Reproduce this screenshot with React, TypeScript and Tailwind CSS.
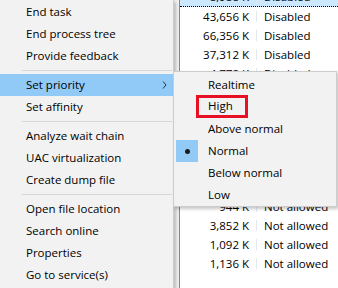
import * as React from 'react';

type Row = { mem: string; uac: string };

const rows: Row[] = [
  { mem: '8,988 K', uac: 'Disabled' },
  { mem: '43,656 K', uac: 'Disabled' },
  { mem: '66,356 K', uac: 'Disabled' },
  { mem: '37,312 K', uac: 'Disabled' },
  { mem: '4,772 K', uac: 'Disabled' },
  { mem: '2,140 K', uac: 'Disabled' },
  { mem: '1,804 K', uac: 'Not allowed' },
  { mem: '5,216 K', uac: 'Not allowed' },
  { mem: '1,368 K', uac: 'Not allowed' },
  { mem: '2,492 K', uac: 'Not allowed' },
  { mem: '10,260 K', uac: 'Not allowed' },
  { mem: '944 K', uac: 'Not allowed' },
  { mem: '3,852 K', uac: 'Not allowed' },
  { mem: '1,092 K', uac: 'Not allowed' },
  { mem: '1,136 K', uac: 'Not allowed' },
];

type MenuEntry = { label: string; sub?: boolean; active?: boolean } | 'sep';

const menu: MenuEntry[] = [
  { label: 'End task' },
  { label: 'End process tree' },
  { label: 'Provide feedback' },
  'sep',
  { label: 'Set priority', sub: true, active: true },
  { label: 'Set affinity' },
  'sep',
  { label: 'Analyze wait chain' },
  { label: 'UAC virtualization' },
  { label: 'Create dump file' },
  'sep',
  { label: 'Open file location' },
  { label: 'Search online' },
  { label: 'Properties' },
  { label: 'Go to service(s)' },
];

const priorities = ['Realtime', 'High', 'Above normal', 'Normal', 'Below normal', 'Low'];

const font = { fontFamily: '"Open Sans", "Noto Sans", sans-serif' };

function ProcessList() {
  return (
    <div className="flex h-full">
      <div className="w-[179px] shrink-0" />
      <div className="flex-1 overflow-hidden border-l border-[#828790] bg-white">
        <div className="-mt-[12px] flex flex-col">
          {rows.map((r, i) => (
            <div
              key={i}
              className={
                i === 0
                  ? 'flex h-[19px] items-center border-b border-dotted border-black bg-[#cce8ff]'
                  : 'flex h-[19px] items-center'
              }
            >
              <div className="w-[77px] shrink-0 border-r border-[#e3e8f0] pr-[7px] text-right">{r.mem}</div>
              <div className="pl-[7px] whitespace-nowrap">{r.uac}</div>
            </div>
          ))}
        </div>
      </div>
    </div>
  );
}

function Chevron() {
  return (
    <svg width="5" height="8" viewBox="0 0 5 8" className="mr-[6px]">
      <path d="M1 0.5 L4 4 L1 7.5" fill="none" stroke="#333" strokeWidth="1" />
    </svg>
  );
}

function ContextMenu() {
  return (
    <div className="absolute left-0 top-0 flex h-[288px] w-[174px] flex-col border-r border-[#cccccc] bg-[#f2f2f2] pt-[1px] shadow-[2px_2px_3px_rgba(0,0,0,0.22)]">
      {menu.map((m, i) =>
        m === 'sep' ? (
          <div key={i} className="flex h-[7px] items-center pl-[22px] pr-[1px]">
            <div className="h-px flex-1 bg-[#d7d7d7]" />
          </div>
        ) : (
          <div
            key={i}
            className={
              m.active
                ? 'flex h-[22px] items-center justify-between bg-[#91c9f7] pl-[26px]'
                : 'flex h-[22px] items-center pl-[26px]'
            }
          >
            <span>{m.label}</span>
            {m.sub && <Chevron />}
          </div>
        ),
      )}
    </div>
  );
}

function PrioritySubmenu() {
  return (
    <div className="absolute left-[173px] top-[71px] w-[164px] border border-[#cccccc] bg-[#f2f2f2] pt-[2px] shadow-[2px_2px_3px_rgba(0,0,0,0.22)]">
      {priorities.map((p) => (
        <div key={p} className="flex h-[22px] items-center pl-[2px]">
          <div
            className={
              p === 'Normal'
                ? 'flex h-[22px] w-[22px] shrink-0 items-center justify-center bg-[#91c9f7]'
                : 'h-[22px] w-[22px] shrink-0'
            }
          >
            {p === 'Normal' && <div className="h-[5px] w-[5px] rounded-full bg-[#1a1a1a]" />}
          </div>
          {p === 'High' ? (
            <span className="-ml-[2px] -mt-[2px] flex h-[23px] w-[52px] items-center border-[3px] border-[#e81123] pl-[9px]">
              {p}
            </span>
          ) : (
            <span className="ml-[10px]">{p}</span>
          )}
        </div>
      ))}
    </div>
  );
}

export default function App() {
  return (
    <div
      className="relative h-[288px] w-[338px] overflow-hidden bg-[#f0f0f0] text-[11.5px] leading-none text-black"
      style={font}
    >
      <ProcessList />
      <ContextMenu />
      <PrioritySubmenu />
    </div>
  );
}
